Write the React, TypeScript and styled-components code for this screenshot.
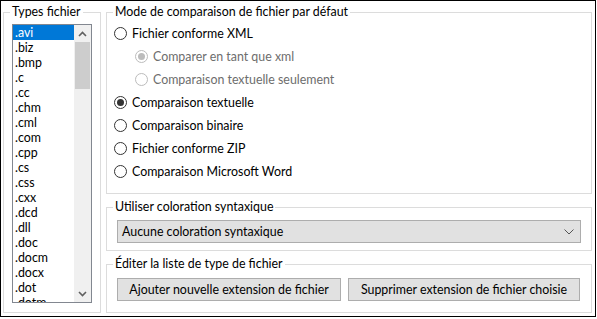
import styled, { createGlobalStyle } from 'styled-components';

const GlobalStyle = createGlobalStyle`
  html, body {
    margin: 0;
    padding: 0;
    background: #ffffff;
  }
  body {
    font-family: Lato, 'Noto Sans', sans-serif;
    font-size: 12.4px;
    color: #000000;
  }
`;

const Frame = styled.div`
  box-sizing: border-box;
  width: 596px;
  height: 317px;
  border: 1px solid #000000;
  background: #ffffff;
  display: flex;
  gap: 5px;
  padding: 3px 3px 3px 2px;
`;

const Group = styled.fieldset<{ $width?: number; $height: number }>`
  box-sizing: border-box;
  margin: 0;
  padding: 0;
  min-width: 0;
  border: 1px solid #dcdcdc;
  width: ${(p) => (p.$width ? `${p.$width}px` : 'auto')};
  height: ${(p) => p.$height}px;
`;

const Legend = styled.legend`
  margin-left: 6px;
  padding: 0 2px;
  line-height: 16px;
  height: 16px;
  font-size: 12.4px;
`;

const Column = styled.div`
  display: flex;
  flex-direction: column;
  gap: 5px;
  width: 486px;
`;

const ListPad = styled.div`
  padding: 4px 9px 0 8px;
`;

const ListBox = styled.div`
  box-sizing: border-box;
  width: 80px;
  height: 279px;
  border: 1px solid #828790;
  display: flex;
  overflow: hidden;
`;

const Items = styled.ul`
  list-style: none;
  margin: 0;
  padding: 0;
  flex: 1;
  overflow: hidden;
`;

const Item = styled.li<{ $selected?: boolean }>`
  height: 15px;
  line-height: 15px;
  padding-left: 2px;
  white-space: nowrap;
  background: ${(p) => (p.$selected ? '#0078d7' : 'transparent')};
  color: ${(p) => (p.$selected ? '#ffffff' : '#000000')};
`;

const ScrollBar = styled.div`
  width: 17px;
  background: #f0f0f0;
  display: flex;
  flex-direction: column;
`;

const ScrollArrow = styled.div`
  height: 17px;
  display: flex;
  align-items: center;
  justify-content: center;
`;

const ScrollTrack = styled.div`
  flex: 1;
  padding: 0 1px;
`;

const Thumb = styled.div`
  height: 47px;
  background: #cdcdcd;
`;

const Options = styled.div`
  padding: 2px 0 0 7px;
  display: flex;
  flex-direction: column;
`;

const RadioRow = styled.label<{ $indent?: boolean; $disabled?: boolean }>`
  display: flex;
  align-items: center;
  height: 23px;
  gap: 5px;
  padding-left: ${(p) => (p.$indent ? '21px' : '0')};
  color: ${(p) => (p.$disabled ? '#6d6d6d' : '#000000')};
`;

const RadioCircle = styled.span<{ $checked?: boolean; $disabled?: boolean }>`
  box-sizing: border-box;
  width: 13px;
  height: 13px;
  border-radius: 50%;
  border: 1px solid ${(p) => (p.$disabled ? '#bcbcbc' : '#333333')};
  background: #ffffff;
  display: flex;
  align-items: center;
  justify-content: center;

  &::after {
    content: '';
    display: ${(p) => (p.$checked ? 'block' : 'none')};
    width: 7px;
    height: 7px;
    border-radius: 50%;
    background: ${(p) => (p.$disabled ? '#bcbcbc' : '#333333')};
  }
`;

const ComboPad = styled.div`
  padding: 5px 10px 0 10px;
`;

const Combo = styled.div`
  box-sizing: border-box;
  height: 23px;
  border: 1px solid #adadad;
  background: #e1e1e1;
  display: flex;
  align-items: center;
  justify-content: space-between;
  padding: 0 6px 0 4px;
`;

const ButtonRow = styled.div`
  padding: 6px 11px 0 10px;
  display: flex;
  gap: 7px;
`;

const Button = styled.button<{ $width: number }>`
  box-sizing: border-box;
  width: ${(p) => p.$width}px;
  height: 23px;
  border: 1px solid #adadad;
  background: #e1e1e1;
  font-family: inherit;
  font-size: 12.4px;
  color: #000000;
  padding: 0;
`;

const extensions = [
  '.avi', '.biz', '.bmp', '.c', '.cc', '.chm', '.cml', '.com', '.cpp', '.cs',
  '.css', '.cxx', '.dcd', '.dll', '.doc', '.docm', '.docx', '.dot', '.dotm',
];

const options = [
  { label: 'Fichier conforme XML' },
  { label: 'Comparer en tant que xml', indent: true, disabled: true, checked: true },
  { label: 'Comparaison textuelle seulement', indent: true, disabled: true },
  { label: 'Comparaison textuelle', checked: true },
  { label: 'Comparaison binaire' },
  { label: 'Fichier conforme ZIP' },
  { label: 'Comparaison Microsoft Word' },
];

const Chevron = ({ up }: { up?: boolean }) => (
  <svg width="9" height="6" viewBox="0 0 9 6">
    <path
      d={up ? 'M1 5 L4.5 1.5 L8 5' : 'M1 1 L4.5 4.5 L8 1'}
      fill="none"
      stroke="#606060"
      strokeWidth="1.6"
    />
  </svg>
);

export default function App() {
  return (
    <>
      <GlobalStyle />
      <Frame>
        <Group $width={99} $height={309}>
          <Legend>Types fichier</Legend>
          <ListPad>
            <ListBox>
              <Items>
                {extensions.map((ext, i) => (
                  <Item key={ext} $selected={i === 0}>
                    {ext}
                  </Item>
                ))}
              </Items>
              <ScrollBar>
                <ScrollArrow>
                  <Chevron up />
                </ScrollArrow>
                <ScrollTrack>
                  <Thumb />
                </ScrollTrack>
                <ScrollArrow>
                  <Chevron />
                </ScrollArrow>
              </ScrollBar>
            </ListBox>
          </ListPad>
        </Group>
        <Column>
          <Group $height={190}>
            <Legend>Mode de comparaison de fichier par défaut</Legend>
            <Options>
              {options.map((o) => (
                <RadioRow key={o.label} $indent={o.indent} $disabled={o.disabled}>
                  <RadioCircle $checked={o.checked} $disabled={o.disabled} />
                  {o.label}
                </RadioRow>
              ))}
            </Options>
          </Group>
          <Group $height={52}>
            <Legend>Utiliser coloration syntaxique</Legend>
            <ComboPad>
              <Combo>
                <span>Aucune coloration syntaxique</span>
                <svg width="10" height="6" viewBox="0 0 10 6">
                  <path d="M0.5 0.5 L5 5 L9.5 0.5" fill="none" stroke="#555555" strokeWidth="1" />
                </svg>
              </Combo>
            </ComboPad>
          </Group>
          <Group $height={57}>
            <Legend>Éditer la liste de type de fichier</Legend>
            <ButtonRow>
              <Button $width={224}>Ajouter nouvelle extension de fichier</Button>
              <Button $width={232}>Supprimer extension de fichier choisie</Button>
            </ButtonRow>
          </Group>
        </Column>
      </Frame>
    </>
  );
}
